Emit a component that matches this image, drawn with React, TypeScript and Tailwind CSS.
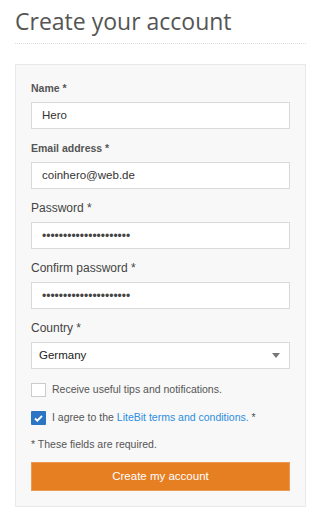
import React from "react";

function Field({ label, bold, children }: { label: string; bold?: boolean; children: React.ReactNode }) {
  return (
    <div className="flex flex-col">
      <label
        className={
          bold
            ? "text-[10.5px] font-bold text-[#555] leading-[14px] mb-[7px]"
            : "text-[12px] text-[#444] leading-[14px] mb-[7px]"
        }
      >
        {label}
      </label>
      {children}
    </div>
  );
}

function Input({ value, dots }: { value: string; dots?: boolean }) {
  return (
    <div
      className={
        dots
          ? "h-[27px] bg-white border border-[#d9d9d9] flex items-center px-[10px] text-[12px] text-[#444]"
          : "h-[27px] bg-white border border-[#d9d9d9] flex items-center px-[10px] text-[11.5px] text-[#333]"
      }
    >
      {value}
    </div>
  );
}

export default function App() {
  return (
    <div className="w-[330px] h-[522px] bg-white px-[15px] pt-[5px]" style={{ fontFamily: "'Liberation Sans', Arial, sans-serif" }}>
      <h1
        className="text-[23px] text-[#555] leading-[32px] pb-[6px] border-b border-dotted border-[#ddd] w-[291px]"
        style={{ fontFamily: "'Open Sans', sans-serif" }}
      >
        Create your account
      </h1>
      <div className="mt-[20px] w-[291px] bg-[#f8f8f8] border border-[#e9e9e9] px-[15px] pt-[16px] pb-[15px] flex flex-col">
        <div className="flex flex-col gap-[12px]">
          <Field label="Name *" bold><Input value="Hero" /></Field>
          <Field label="Email address *" bold><Input value="coinhero@web.de" /></Field>
          <Field label="Password *"><Input value="•••••••••••••••••••••" dots /></Field>
          <Field label="Confirm password *"><Input value="•••••••••••••••••••••" dots /></Field>
          <Field label="Country *">
            <div className="h-[27px] bg-white border border-[#d9d9d9] flex items-center justify-between pl-[7px] pr-[9px] text-[11.5px] text-[#222]">
              <span>Germany</span>
              <svg width="8" height="5" viewBox="0 0 8 5"><path d="M0 0h8L4 5z" fill="#777" /></svg>
            </div>
          </Field>
        </div>
        <div className="flex items-center mt-[14px] h-[14px]">
          <div className="w-[15px] h-[14px] bg-white border border-[#ccc] mr-[6px]" />
          <span className="text-[10.5px] text-[#555]">Receive useful tips and notifications.</span>
        </div>
        <div className="flex items-center mt-[14px] h-[14px]">
          <div className="w-[15px] h-[14px] bg-[#2c75c2] rounded-[1px] mr-[6px] flex items-center justify-center">
            <svg width="9" height="7" viewBox="0 0 9 7"><path d="M1 3.5l2.3 2.2L8 1" stroke="white" strokeWidth="1.8" fill="none" /></svg>
          </div>
          <span className="text-[10.5px] text-[#555]">
            I agree to the <span className="text-[#2b8ee0]">LiteBit terms and conditions.</span> *
          </span>
        </div>
        <div className="text-[10.5px] text-[#555] mt-[12px] leading-[14px]">* These fields are required.</div>
        <button className="mt-[11px] h-[29px] w-full bg-[#e67e22] border border-[#eb9a55] text-white text-[11.5px]">
          Create my account
        </button>
      </div>
    </div>
  );
}
